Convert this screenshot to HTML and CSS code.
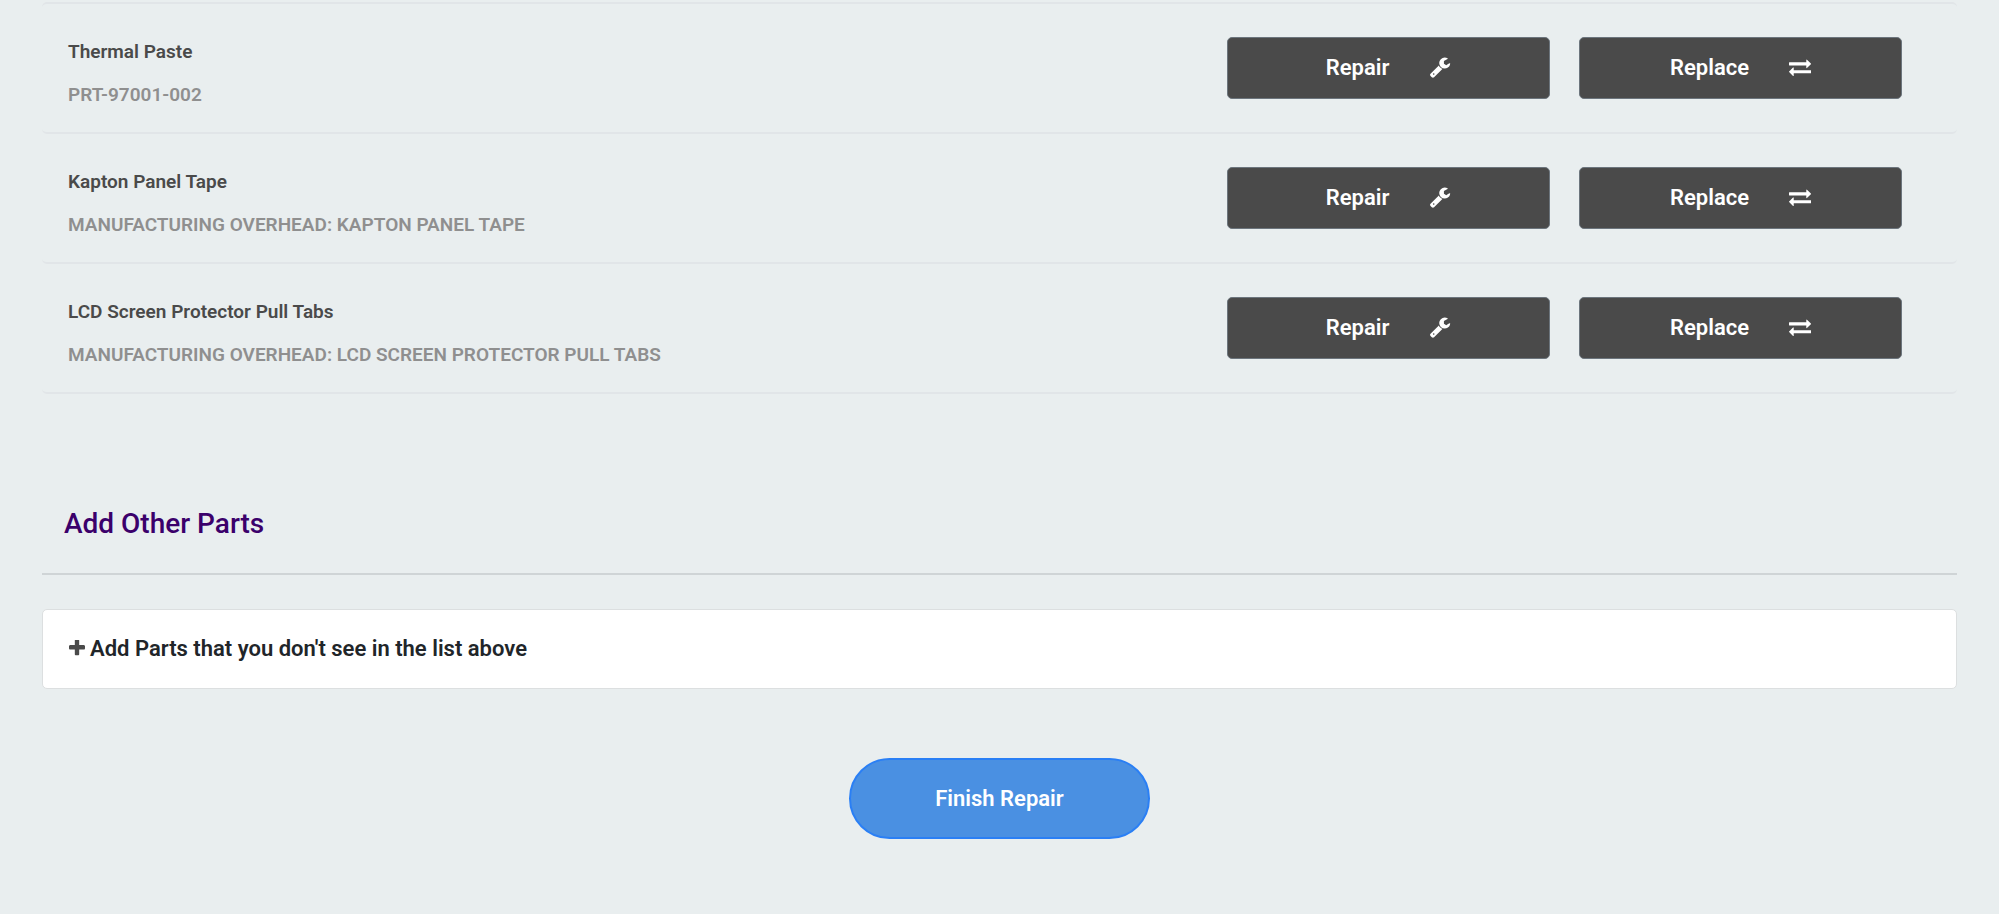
FILE: index.html
```html
<!DOCTYPE html>
<html lang="en">
<head>
    <meta charset="UTF-8">
    <meta name="viewport" content="width=device-width, initial-scale=1.0">
    <title>Repair Parts</title>
    <link rel="stylesheet" href="styles.css">
</head>
<body>
    <!-- Icon shapes shared by the buttons -->
    <svg class="icon-defs" aria-hidden="true">
        <symbol id="icon-wrench" viewBox="0 0 1792 1792">
            <path d="M448 1472q0-26-19-45t-45-19-45 19-19 45 19 45 45 19 45-19 19-45zm644-420l-682 682q-37 37-90 37-52 0-91-37l-106-108q-38-36-38-90 0-53 38-91l681-681q39 98 114.500 173.500t173.500 114.500zm634-435q0 39-23 106-47 134-164.500 217.500t-258.500 83.500q-185 0-316.500-131.500t-131.500-316.500 131.500-316.500 316.500-131.500q58 0 121.500 16.500t107.500 46.500q16 11 16 28t-16 28l-293 169v224l193 107q5-3 79-48.500t135.500-81 70.500-35.500q15 0 23.500 10t8.500 25z"/>
        </symbol>
        <symbol id="icon-exchange" viewBox="0 0 1792 1792">
            <path d="M1792 1184v192q0 13-9.500 22.500t-22.500 9.500h-1376v192q0 13-9.500 22.500t-22.500 9.500q-12 0-24-10l-319-320q-9-9-9-22 0-14 9-23l320-320q9-9 23-9 13 0 22.500 9.500t9.500 22.500v192h1376q13 0 22.500 9.500t9.500 22.500zm0-544q0 14-9 23l-320 320q-9 9-23 9-13 0-22.500-9.500t-9.500-22.500v-192h-1376q-13 0-22.500-9.500t-9.500-22.500v-192q0-13 9.500-22.500t22.500-9.500h1376v-192q0-14 9-23t23-9q12 0 24 10l319 319q9 9 9 23z"/>
        </symbol>
        <symbol id="icon-plus" viewBox="192 192 1408 1408">
            <path d="M1600 736v192q0 40-28 68t-68 28h-416v416q0 40-28 68t-68 28h-192q-40 0-68-28t-28-68v-416h-416q-40 0-68-28t-28-68v-192q0-40 28-68t68-28h416v-416q0-40 28-68t68-28h192q40 0 68 28t28 68v416h416q40 0 68 28t28 68z"/>
        </symbol>
    </svg>

    <div class="container">
        <!-- Parts List -->
        <ul class="parts-list">
            <li class="part">
                <div class="part-info">
                    <p class="part-name">Thermal Paste</p>
                    <p class="part-number">PRT-97001-002</p>
                </div>
                <button type="button" class="part-btn">Repair <svg class="icon"><use href="#icon-wrench"/></svg></button>
                <button type="button" class="part-btn">Replace <svg class="icon"><use href="#icon-exchange"/></svg></button>
            </li>
            <li class="part">
                <div class="part-info">
                    <p class="part-name">Kapton Panel Tape</p>
                    <p class="part-number">MANUFACTURING OVERHEAD: KAPTON PANEL TAPE</p>
                </div>
                <button type="button" class="part-btn">Repair <svg class="icon"><use href="#icon-wrench"/></svg></button>
                <button type="button" class="part-btn">Replace <svg class="icon"><use href="#icon-exchange"/></svg></button>
            </li>
            <li class="part">
                <div class="part-info">
                    <p class="part-name">LCD Screen Protector Pull Tabs</p>
                    <p class="part-number">MANUFACTURING OVERHEAD: LCD SCREEN PROTECTOR PULL TABS</p>
                </div>
                <button type="button" class="part-btn">Repair <svg class="icon"><use href="#icon-wrench"/></svg></button>
                <button type="button" class="part-btn">Replace <svg class="icon"><use href="#icon-exchange"/></svg></button>
            </li>
        </ul>

        <!-- Other Parts -->
        <h2 class="section-title">Add Other Parts</h2>
        <button type="button" class="add-parts"><svg class="icon-plus"><use href="#icon-plus"/></svg> Add Parts that you don't see in the list above</button>

        <button type="button" class="finish-btn">Finish Repair</button>
    </div>
</body>
</html>
```

FILE: styles.css
```css
* {
    box-sizing: border-box;
}

body {
    font-family: Roboto, "Liberation Sans", sans-serif;
    font-weight: 600;
    background-color: #e9eeef;
    margin: 0;
}

.container {
    display: flex;
    flex-direction: column;
    padding: 2px 42px 76px;
}

.icon-defs {
    display: none;
}

button {
    font-family: inherit;
    font-weight: 600;
    font-size: 22px;
    cursor: pointer;
}

.parts-list {
    list-style: none;
    margin: 0;
    padding: 0;
    border-top: 2px solid #e1e5e8;
    border-radius: 5px;
}

.part {
    display: grid;
    grid-template-columns: 7fr 2fr 2fr;
    column-gap: 29px;
    align-items: start;
    padding: 33px 55px 22px 26px;
    border-bottom: 2px solid #e1e5e8;
    border-radius: 5px;
}

.part-name,
.part-number {
    margin: 0;
    font-size: 19px;
    line-height: 30px;
}

.part-name {
    color: #4a4a4a;
    margin-bottom: 13px;
}

.part-number {
    color: #8f8f8f;
}

.part-btn {
    display: flex;
    align-items: center;
    justify-content: center;
    gap: 40px;
    height: 62px;
    padding-bottom: 3px;
    background-color: #4a4a4a;
    color: white;
    border: 1px solid #6c757d;
    border-radius: 5px;
}

.icon {
    width: 22px;
    height: 22px;
    fill: currentColor;
}

.section-title {
    margin: 112px 0 34px;
    padding: 0 22px 31px;
    border-bottom: 2px solid #cfd4d6;
    color: #3b006b;
    font-size: 28px;
    font-weight: 500;
    line-height: 36px;
}

.add-parts {
    display: flex;
    align-items: center;
    gap: 5px;
    height: 80px;
    padding: 0 26px 2px;
    background-color: white;
    border: 1px solid #dcdfe0;
    border-radius: 5px;
    color: #212529;
}

.icon-plus {
    width: 16px;
    height: 16px;
    fill: #4a4a4a;
}

.finish-btn {
    align-self: center;
    margin-top: 69px;
    padding: 26px 84px;
    background-color: #4a90e2;
    color: white;
    border: 2px solid #2a7ff5;
    border-radius: 41px;
}
```
